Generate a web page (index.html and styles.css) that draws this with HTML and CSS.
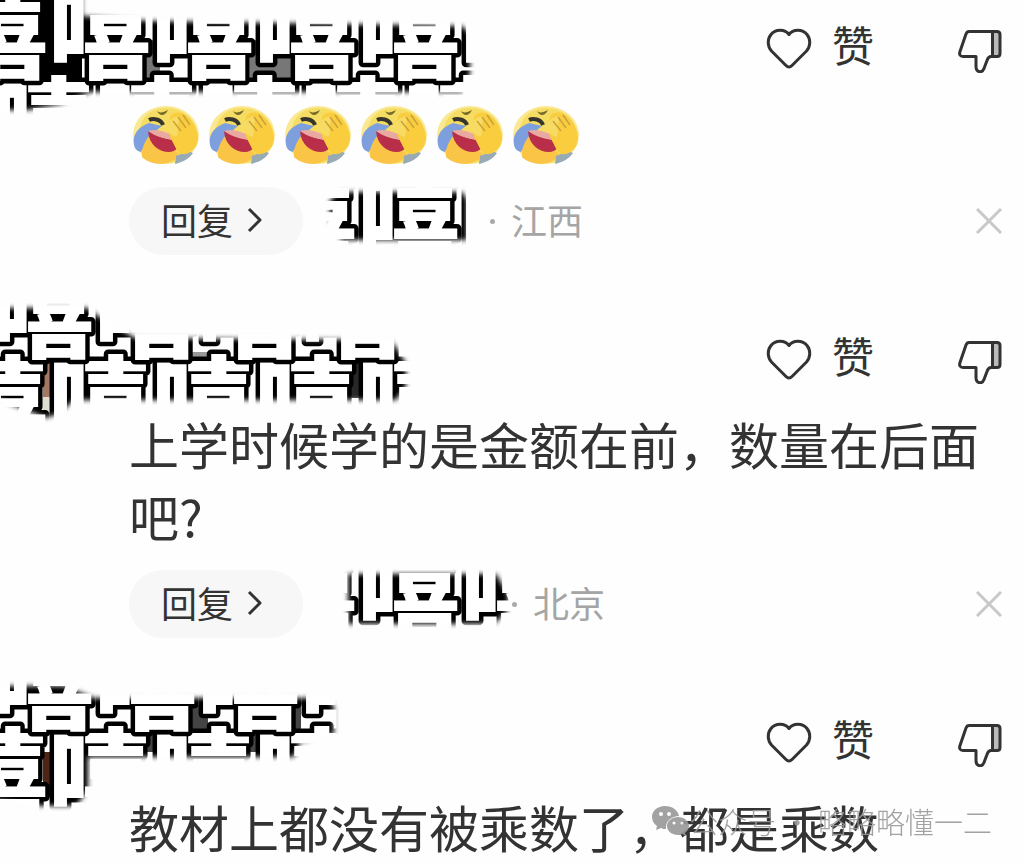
FILE: index.html
```html
<!DOCTYPE html>
<html lang="zh-CN">
<head>
    <meta charset="UTF-8">
    <title>评论</title>
    <link rel="stylesheet" href="styles.css">
</head>
<body>
<!-- 图标 -->
<svg class="defs" aria-hidden="true">
    <symbol id="heart" viewBox="0 0 46 42">
        <path d="M23 6.500C19 1 9.500.8 5 6.500c-4 5-3.500 12 .5 16.500L20 37.500c2 2 4 2 6 0L40.500 23c4-4.500 4.500-11.500.5-16.500C36.500.8 27 1 23 6.500z"/>
    </symbol>
    <symbol id="dislike" viewBox="0 0 44 44">
        <path class="cuff" d="M34 3h7v24h-7z"/>
        <path d="M11 2.500h28q3 0 3 3v19q0 3-3 3h-6c-2 0-3 1-4 4l-3 8c-2 5-8 4-8-2v-10H5c-3 0-4-2-3-5L8 5q1-2.500 3-2.500zM34.500 2.500v25"/>
    </symbol>
    <symbol id="facepalm" viewBox="0 0 68 60">
        <ellipse cx="34" cy="30" rx="33" ry="29" fill="#fbe893"/>
        <path d="M34 3c17 0 31 12 31 27S51 58 34 58 7 46 7 30 18 3 34 3z" fill="#f5dc62"/>
        <path d="M2 40C0 30 6 22 17 18l13 3C20 28 14 39 9 47 5 46 3 44 2 40z" fill="#7d9fdd"/>
        <path d="M10 52c-1-8 3-17 9-23l28 20c-3 6-11 10-18 10-8 0-15-3-19-7z" fill="#fac447"/>
        <path d="M44 51l12-5 5 2c-4 6-10 9-18 11z" fill="#98abb5"/>
        <path d="M16 26c8 4 20 10 32 9 0 7-4 12-11 12-10 0-20-7-21-21z" fill="#b92f49"/>
        <path d="M16 26c7-3 20 0 32 9-13 0-24-3-32-9z" fill="#e9a9a2"/>
        <path d="M39 10c8-6 17 0 22 8 6 9 7 20 1 26-6 6-12 7-17 2-3-9-13-18-6-36z" fill="#f9cd3d"/>
        <path d="M33 21c3-5 8-9 14-10l-2 21c-5-1-10-5-12-11z" fill="#f8db63"/>
        <path d="M41 16l8 10M46 12l8 11M51 10l7 10" fill="none" stroke="#c9a23e" stroke-width="1.500"/>
        <path d="M17 15c4-2 12-1 14 5" fill="none" stroke="#35352d" stroke-width="4"/>
        <path d="M25 6c2 2 6 2 11-1-2 4-4 5-6 5s-4-2-5-4z" fill="#766b2a"/>
    </symbol>
    <symbol id="arrow" viewBox="0 0 16 26">
        <path d="M2 2l11 11L2 24"/>
    </symbol>
    <symbol id="close" viewBox="0 0 26 26">
        <path d="M1 1l24 24M25 1L1 25"/>
    </symbol>
</svg>

<main class="comments">
    <article class="comment">
        <header class="actions">
            <button class="like"><svg class="heart"><use href="#heart"/></svg>赞</button>
            <button class="dislike" aria-label="踩"><svg><use href="#dislike"/></svg></button>
        </header>
        <div class="emojis">
            <svg><use href="#facepalm"/></svg>
            <svg><use href="#facepalm"/></svg>
            <svg><use href="#facepalm"/></svg>
            <svg><use href="#facepalm"/></svg>
            <svg><use href="#facepalm"/></svg>
            <svg><use href="#facepalm"/></svg>
        </div>
        <footer class="info">
            <button class="reply">回复<svg><use href="#arrow"/></svg></button>
            <span class="date short"></span>
            <span class="dot"></span>
            <span class="place">江西</span>
            <button class="close" aria-label="关闭"><svg><use href="#close"/></svg></button>
        </footer>
    </article>

    <article class="comment">
        <header class="actions">
            <button class="like"><svg class="heart"><use href="#heart"/></svg>赞</button>
            <button class="dislike" aria-label="踩"><svg><use href="#dislike"/></svg></button>
        </header>
        <p class="text">上学时候学的是金额在前，数量在后面吧?</p>
        <footer class="info">
            <button class="reply">回复<svg><use href="#arrow"/></svg></button>
            <span class="date long"></span>
            <span class="dot"></span>
            <span class="place">北京</span>
            <button class="close" aria-label="关闭"><svg><use href="#close"/></svg></button>
        </footer>
    </article>

    <article class="comment">
        <header class="actions">
            <button class="like"><svg class="heart"><use href="#heart"/></svg>赞</button>
            <button class="dislike" aria-label="踩"><svg><use href="#dislike"/></svg></button>
        </header>
        <p class="text">教材上都没有被乘数了，都是乘数</p>
        <div class="watermark">
            <svg viewBox="0 0 38 32">
                <path d="M14 1C6 1 1 6 1 12c0 4 2 7 5 9l-1 4 5-2c2 1 3 1 5 1-1-8 6-13 13-13C27 5 21 1 14 1z"/>
                <path d="M27 12c-6 0-11 4-11 9s5 9 11 9c1 0 3 0 4-1l4 2-1-3c2-2 4-4 4-7 0-5-5-9-11-9z"/>
                <g fill="#fff"><circle cx="10" cy="9" r="2"/><circle cx="18" cy="9" r="2"/><circle cx="23" cy="18" r="1.500"/><circle cx="31" cy="18" r="1.500"/></g>
            </svg>
            <span>公众号 · 略略略懂一二</span>
        </div>
    </article>
</main>

<!-- 遮住头像、昵称和日期的文字涂抹 -->
<svg class="scribble" width="520" height="862" viewBox="0 0 520 862">
    <defs>
        <filter id="soft" x="-10%" y="-10%" width="120%" height="120%"><feGaussianBlur stdDeviation="2.500"/></filter>
        <mask id="brush" maskUnits="userSpaceOnUse" x="0" y="0" width="520" height="862">
            <g fill="#fff" filter="url(#soft)">
                <path d="M-20-20H82V16L150 21L462 26L470 34V74L462 92L150 92L90 92L60 104L28 110H-20z"/>
                <path d="M340 192H462L467 200V240H342L330 222V200z"/>
                <path d="M-20 308H88L98 316L135 338L390 340L398 350L406 364V386L396 400H74L60 413L46 418L-20 392z"/>
                <path d="M348 574H496L508 594V610L494 624H348z"/>
                <path d="M-20 686H64L94 698H326L334 706V734L300 742L294 757H88V790L76 806H40L-20 798z"/>
            </g>
        </mask>
    </defs>
    <g mask="url(#brush)">
        <path d="M0 0h82v84H0z" fill="#000"/>
        <path d="M145 40h15v44h-15zM250 40h60v44h-60z" fill="#777"/>
        <path d="M43 355h9v42h-9z" fill="#a47762"/>
        <path d="M43 397h9v22h-9z" fill="#dedecf"/>
        <path d="M190 352h20v12h-20z" fill="#999"/>
        <path d="M350 360h18v38h-18z" fill="#282828"/>
        <path d="M145 710h20v42h-20zM190 705h18v32h-18zM245 735h16v17h-16zM293 705h8v30h-8z" fill="#444"/>
        <path d="M43 752h10v45H43z" fill="#4f2518"/>
        <!-- 从下往上画，上一行压住下一行 -->
        <g class="tiles">
            <text x="-55" y="815">嘻嘻嘻嘻</text>
            <text x="-112" y="722">嘻嘻嘻嘻嘻</text>
            <text x="254" y="629">嘻嘻嘻</text>
            <text x="-55" y="443">嘻嘻嘻嘻嘻</text>
            <text x="-112" y="350">嘻嘻嘻嘻嘻</text>
            <text x="254" y="257">嘻嘻嘻</text>
            <text x="-112" y="164">嘻嘻嘻嘻嘻嘻</text>
            <text x="-55" y="71">嘻嘻嘻嘻嘻嘻</text>
        </g>
    </g>
</svg>
</body>
</html>
```
FILE: styles.css
```css
body {
    margin: 0;
    height: 100vh;
    overflow: hidden;
    position: relative;
    background-color: #fefefe;
    color: #333;
    font-family: "Noto Sans CJK SC", sans-serif;
}
button {
    border: 0;
    padding: 0;
    background: none;
    color: inherit;
    font-family: inherit;
    display: flex;
    align-items: center;
}
svg {
    display: block;
    flex: none;
}
.defs {
    position: absolute;
    width: 0;
    height: 0;
}
.comments {
    display: flex;
    flex-direction: column;
    gap: 74px;
    padding: 18px 22px 0 129px;
}
.comment {
    position: relative;
}
.actions {
    display: flex;
    justify-content: flex-end;
    gap: 84px;
    height: 60px;
    margin-bottom: 18px;
}
.like {
    gap: 20px;
    height: 52px;
    font-size: 42px;
    line-height: 48px;
}
.like svg,
.dislike svg,
.reply svg,
.close svg {
    fill: none;
    stroke: #333;
    stroke-width: 3;
    stroke-linejoin: round;
}
.heart {
    width: 46px;
    height: 42px;
    margin-top: 10px;
}
.dislike {
    padding-top: 6px;
}
.dislike svg {
    width: 44px;
    height: 44px;
}
.cuff {
    fill: #bbb;
    stroke: none;
}
.emojis {
    display: flex;
    align-items: center;
    gap: 8px;
    height: 66px;
    padding: 6px 0 0 3px;
}
.emojis svg {
    width: 68px;
    height: 60px;
}
.text {
    margin: 0;
    font-size: 50px;
    line-height: 72px;
}
.info {
    display: flex;
    align-items: center;
    margin-top: 19px;
    font-size: 36px;
    line-height: 64px;
}
.reply {
    gap: 14px;
    height: 68px;
    padding: 0 40px 4px 32px;
    border-radius: 34px;
    background-color: #f7f7f7;
    font-size: 36px;
}
.reply svg {
    width: 16px;
    height: 26px;
    margin-top: 2px;
}
.short {
    width: 187px;
}
.long {
    width: 209px;
}
.dot {
    width: 5px;
    height: 5px;
    border-radius: 50%;
    background-color: #aaa;
}
.place {
    margin-left: 16px;
    padding-bottom: 4px;
    color: #a5a5a5;
}
.close {
    margin-left: auto;
}
.close svg {
    width: 26px;
    height: 26px;
    stroke: #c8c8c8;
}
.watermark {
    position: absolute;
    right: 10px;
    bottom: 21px;
    display: flex;
    align-items: center;
    color: #999;
    font-size: 29px;
    font-weight: 300;
    line-height: 40px;
    opacity: 0.9;
}
.watermark svg {
    width: 38px;
    height: 32px;
    fill: #999;
}
/* 涂抹层盖在评论上面 */
.scribble {
    position: absolute;
    left: 0;
    top: 0;
    pointer-events: none;
}
.tiles text {
    font-size: 103px;
    font-weight: 900;
    fill: #fff;
    stroke: #000;
    stroke-width: 9px;
    stroke-linejoin: round;
    paint-order: stroke;
}
```
